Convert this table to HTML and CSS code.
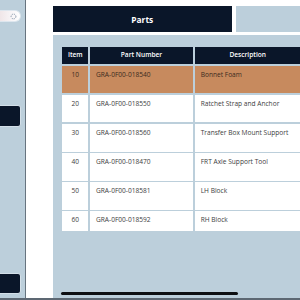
FILE: index.html
```html
<!DOCTYPE html>
<html>
<head>
<meta charset="utf-8">
<link rel="stylesheet" href="styles.css">
</head>
<body>
<div class="app">
  <aside class="sidebar">
    <div class="search">
      <svg class="spin" width="7" height="7" viewBox="0 0 7 7"><circle cx="3.5" cy="3.5" r="2.4" fill="none" stroke="#7d8fa3" stroke-width="0.9" stroke-dasharray="1.2 0.9"/></svg>
    </div>
    <div class="side-btn top"></div>
    <div class="side-btn bottom"></div>
  </aside>
  <div class="gutter"></div>
  <main class="main">
    <nav class="tabs">
      <div class="tab active">Parts</div>
      <div class="tab"></div>
    </nav>
    <section class="panel">
      <div class="grid">
        <div class="row head">
          <div class="cell c">Item</div>
          <div class="cell c">Part Number</div>
          <div class="cell c">Description</div>
        </div>
        <div class="row sel">
          <div class="cell c">10</div>
          <div class="cell">GRA-0F00-018540</div>
          <div class="cell">Bonnet Foam</div>
        </div>
        <div class="row">
          <div class="cell c">20</div>
          <div class="cell">GRA-0F00-018550</div>
          <div class="cell">Ratchet Strap and Anchor</div>
        </div>
        <div class="row">
          <div class="cell c">30</div>
          <div class="cell">GRA-0F00-018560</div>
          <div class="cell">Transfer Box Mount Support</div>
        </div>
        <div class="row">
          <div class="cell c">40</div>
          <div class="cell">GRA-0F00-018470</div>
          <div class="cell">FRT Axle Support Tool</div>
        </div>
        <div class="row">
          <div class="cell c">50</div>
          <div class="cell">GRA-0F00-018581</div>
          <div class="cell">LH Block</div>
        </div>
        <div class="row">
          <div class="cell c">60</div>
          <div class="cell">GRA-0F00-018592</div>
          <div class="cell">RH Block</div>
        </div>
      </div>
      <div class="scrollbar"></div>
    </section>
  </main>
</div>
</body>
</html>
```
FILE: styles.css
```css
html, body {
  margin: 0;
  padding: 0;
  background: #ffffff;
  font-family: "Open Sans", "Liberation Sans", sans-serif;
}
.app {
  display: flex;
  width: 300px;
  height: 300px;
  box-sizing: border-box;
  border-bottom: 2px solid #5d6873;
  overflow: hidden;
}
.sidebar {
  width: 26px;
  flex: none;
  background: #bccfdb;
  border-right: 1px solid #67747f;
  display: flex;
  flex-direction: column;
  padding-top: 10px;
  padding-bottom: 4px;
  box-sizing: border-box;
}
.search {
  width: 21px;
  height: 12px;
  box-sizing: border-box;
  border-radius: 0 6px 6px 0;
  background: linear-gradient(90deg, #f0e6e8 0%, #f7f4f6 55%, #ffffff 100%);
  border: 1px solid #dde6ee;
  border-left: none;
  display: flex;
  align-items: center;
  justify-content: flex-end;
  padding-right: 3px;
}
.spin { display: block; }
.side-btn {
  width: 21px;
  height: 22px;
  box-sizing: border-box;
  background: #0a1629;
  border: 1px solid #d3dfe8;
  border-left: none;
  border-radius: 0 3px 3px 0;
}
.side-btn.top { margin-top: 83px; }
.side-btn.bottom { margin-top: auto; height: 21.5px; }
.gutter {
  width: 26.5px;
  flex: none;
  background: #ffffff;
}
.main {
  flex: 1;
  min-width: 0;
  display: flex;
  flex-direction: column;
  padding-top: 6px;
}
.tabs {
  display: flex;
  gap: 4px;
  height: 26px;
  flex: none;
}
.tab {
  width: 179.5px;
  flex: none;
  background: #bccfdb;
  display: flex;
  align-items: center;
  justify-content: center;
  color: #ffffff;
  font-weight: 700;
  font-size: 8.4px;
}
.tab + .tab { flex: 1; width: auto; }
.tab.active { background: #0a1629; }
.panel {
  margin-top: 3px;
  flex: 1;
  background: #bccfdb;
  display: flex;
  flex-direction: column;
  padding: 11.7px 0 2px 9.8px;
  overflow: hidden;
}
.grid {
  display: grid;
  grid-template-columns: 26px 103px 106px;
  grid-template-rows: 17.6px repeat(5, 27.4px) 19.5px;
  gap: 1.7px;
}
.row { display: contents; }
.cell {
  background: #ffffff;
  color: #3d3d3d;
  font-size: 6.6px;
  line-height: 8px;
  padding: 5px 0 0 6px;
  white-space: nowrap;
  overflow: hidden;
}
.cell.c { text-align: center; padding-left: 0; }
.row.sel .cell { background: #c78a5e; color: #3a2a20; }
.row.head .cell {
  background: #0a1629;
  color: #ffffff;
  font-weight: 600;
  padding: 0;
  display: flex;
  align-items: center;
  justify-content: center;
}
.scrollbar {
  margin-top: auto;
  margin-left: -1.5px;
  width: 177px;
  height: 3px;
  border-radius: 2px;
  background: #0d0f12;
  margin-bottom: 1.5px;
}
```
